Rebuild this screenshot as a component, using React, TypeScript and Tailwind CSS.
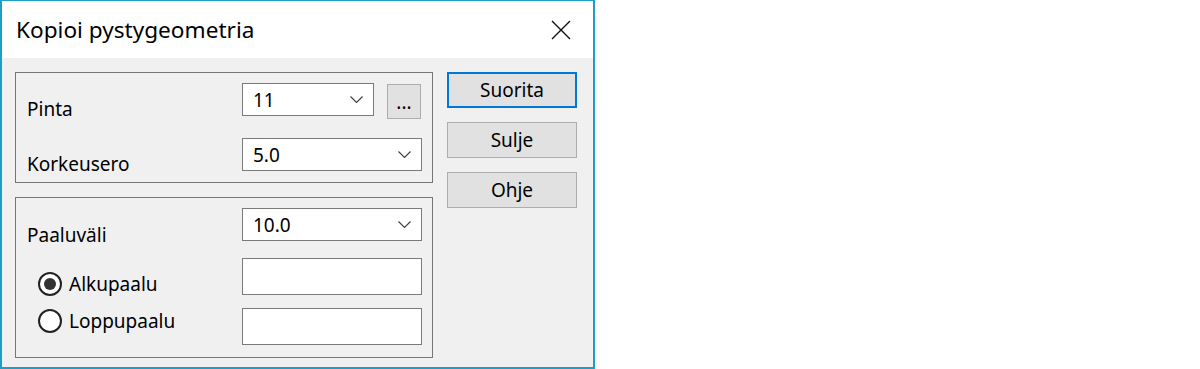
import React from "react";

const Chevron = () => (
  <svg width="13" height="7" viewBox="0 0 13 7" className="shrink-0">
    <path d="M0.5 0.5 L6.5 6.5 L12.5 0.5" fill="none" stroke="#3c3c3c" strokeWidth="1.1" />
  </svg>
);

function Combo({ value, cls }: { value: string; cls: string }) {
  return (
    <div className={cls}>
      <span className="leading-[24px]">{value}</span>
      <Chevron />
    </div>
  );
}

function Radio({ checked, label }: { checked: boolean; label: string }) {
  return (
    <div className="flex items-center gap-[7px] ml-[11px] h-[24px]">
      <div className="w-[24px] h-[24px] rounded-full border-2 border-[#222] bg-white flex items-center justify-center">
        {checked && <div className="w-[12px] h-[12px] rounded-full bg-[#333]" />}
      </div>
      <span className="leading-[24px]">{label}</span>
    </div>
  );
}

function Btn({ label, primary }: { label: string; primary?: boolean }) {
  return (
    <div
      className={
        primary
          ? "h-[36px] bg-[#e1e1e1] border-2 border-[#0078d7] flex items-center justify-center leading-[24px]"
          : "h-[36px] bg-[#e1e1e1] border border-[#adadad] flex items-center justify-center leading-[24px]"
      }
    >
      {label}
    </div>
  );
}

export default function App() {
  return (
    <div className="w-[1200px] h-[369px] bg-white font-['Noto_Sans',sans-serif] text-[19px] text-black">
      <div className="w-[595px] h-[369px] border-x-2 border-b-2 border-t border-[#1b9fc6] flex flex-col">
        <div className="h-[57px] bg-white flex items-center justify-between pl-[14px] pr-[22px] shrink-0">
          <span className="text-[22.6px] leading-[30px]">Kopioi pystygeometria</span>
          <svg width="20" height="20" viewBox="0 0 20 20">
            <path d="M1 1 L19 19 M19 1 L1 19" stroke="#111" strokeWidth="1.4" fill="none" />
          </svg>
        </div>
        <div className="flex-1 bg-[#f0f0f0] flex pt-[14px] pl-[13px] gap-[14px]">
          <div className="flex flex-col w-[418px] gap-[14px]">
            {/* group 1 */}
            <div className="h-[111px] border border-[#767676] flex flex-col pt-[10px] gap-[17px]">
              <div className="flex items-start">
                <div className="w-[226px] pl-[11px] mt-[14px] leading-[24px]">Pinta</div>
                <Combo
                  value="11"
                  cls="w-[132px] h-[33px] bg-white border border-[#7a7a7a] flex items-center justify-between pl-[10px] pr-[10px]"
                />
                <div className="ml-[13px] mt-[1px] w-[34px] h-[35px] bg-[#e1e1e1] border border-[#adadad] flex items-center justify-center leading-[24px]">
                  ...
                </div>
              </div>
              <div className="flex items-start">
                <div className="w-[226px] pl-[11px] mt-[14px] leading-[24px]">Korkeusero</div>
                <Combo
                  value="5.0"
                  cls="w-[180px] h-[33px] bg-white border border-[#7a7a7a] flex items-center justify-between pl-[10px] pr-[10px]"
                />
              </div>
            </div>
            {/* group 2 */}
            <div className="h-[161px] border border-[#767676] flex">
              <div className="w-[226px] pl-[11px] pt-[25px] flex flex-col">
                <div className="leading-[24px]">Paaluväli</div>
                <div className="mt-[25px]">
                  <Radio checked label="Alkupaalu" />
                </div>
                <div className="mt-[13px]">
                  <Radio checked={false} label="Loppupaalu" />
                </div>
              </div>
              <div className="flex flex-col pt-[10px]">
                <Combo
                  value="10.0"
                  cls="w-[180px] h-[33px] bg-white border border-[#7a7a7a] flex items-center justify-between pl-[10px] pr-[10px]"
                />
                <div className="mt-[17px] w-[180px] h-[37px] bg-white border border-[#7a7a7a]" />
                <div className="mt-[13px] w-[180px] h-[37px] bg-white border border-[#7a7a7a]" />
              </div>
            </div>
          </div>
          <div className="flex flex-col w-[130px] gap-[14px]">
            <Btn label="Suorita" primary />
            <Btn label="Sulje" />
            <Btn label="Ohje" />
          </div>
        </div>
      </div>
    </div>
  );
}
